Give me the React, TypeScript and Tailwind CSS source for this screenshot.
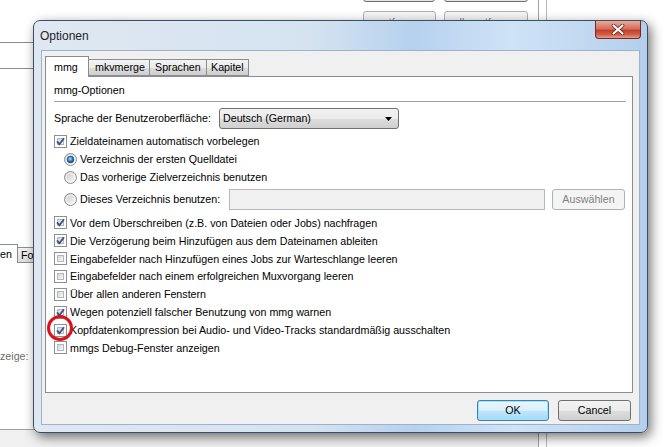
import React from "react";

function CheckBox({ checked }: { checked?: boolean }) {
  return (
    <span className="relative flex size-[13px] shrink-0 items-center justify-center border border-[#8e8f8f] bg-white">
      <span className="absolute inset-[2px] border border-[#b4b8be] bg-[linear-gradient(135deg,#d3d6da,#f8f8f8)]" />
      {checked && (
        <svg className="relative" width="11" height="11" viewBox="0 0 11 11">
          <path d="M2 5.4 L4.4 8.4 L9 2.2" fill="none" stroke="#3c5283" strokeWidth="1.8" />
        </svg>
      )}
    </span>
  );
}

function Radio({ checked }: { checked?: boolean }) {
  return (
    <svg className="shrink-0" width="13" height="13" viewBox="0 0 13 13">
      <defs>
        <linearGradient id="rring" x1="0" y1="0" x2="1" y2="1">
          <stop offset="0" stopColor="#c8c9cb" />
          <stop offset="1" stopColor="#fbfbfb" />
        </linearGradient>
        <radialGradient id="rdot" cx="0.45" cy="0.4" r="0.6">
          <stop offset="0" stopColor="#b6e4fd" />
          <stop offset="0.55" stopColor="#2b84c8" />
          <stop offset="1" stopColor="#0d3a6b" />
        </radialGradient>
      </defs>
      <circle cx="6.5" cy="6.5" r="6" fill="url(#rring)" stroke="#8e8f8f" />
      <circle cx="6.5" cy="6.5" r="4.4" fill="none" stroke="#ffffff" strokeOpacity="0.7" />
      {checked && <circle cx="6.5" cy="6.5" r="3.4" fill="url(#rdot)" stroke="#1a4a7c" strokeWidth="0.6" />}
    </svg>
  );
}

const checks: [string, boolean][] = [
  ["Vor dem Überschreiben (z.B. von Dateien oder Jobs) nachfragen", true],
  ["Die Verzögerung beim Hinzufügen aus dem Dateinamen ableiten", true],
  ["Eingabefelder nach Hinzufügen eines Jobs zur Warteschlange leeren", false],
  ["Eingabefelder nach einem erfolgreichen Muxvorgang leeren", false],
  ["Über allen anderen Fenstern", false],
  ["Wegen potenziell falscher Benutzung von mmg warnen", true],
  ["Kopfdatenkompression bei Audio- und Video-Tracks standardmäßig ausschalten", true],
  ["mmgs Debug-Fenster anzeigen", false],
];

export default function App() {
  return (
    <div className="relative h-[447px] w-[671px] overflow-hidden bg-white font-['Liberation_Sans',Arial,sans-serif] text-[10.7px] text-black">
      {/* background window */}
      <div className="absolute left-0 top-[42px] h-px w-[60px] bg-[#8c8c8c]" />
      <div className="absolute left-0 top-[68px] h-px w-[60px] bg-[#8c8c8c]" />
      <div className="absolute left-[363px] top-[-18px] h-[20px] w-[72px] rounded-[3px] border border-[#707070] bg-[#e6e6e6]" />
      <div className="absolute left-[444px] top-[-18px] h-[20px] w-[84px] rounded-[3px] border border-[#707070] bg-[#e6e6e6]" />
      <div className="absolute left-[363px] top-[11px] flex h-[22px] w-[73px] items-center justify-center rounded-[3px] border border-[#adb2b5] bg-[#f4f4f4] text-[#838383]">
        entfernen
      </div>
      <div className="absolute left-[444px] top-[11px] flex h-[22px] w-[84px] items-center justify-center rounded-[3px] border border-[#adb2b5] bg-[#f4f4f4] text-[#838383]">
        alle entfernen
      </div>
      <div className="absolute left-[538px] top-0 h-[447px] w-px bg-[#a0a0a0]" />
      <div className="absolute left-[546px] top-0 h-[447px] w-px bg-[#b8b8b8]" />
      <div className="absolute left-[-20px] top-[244px] flex h-[19px] w-[38px] items-center justify-end border border-[#898c95] border-b-0 bg-white pr-[5px]">
        en
      </div>
      <div className="absolute left-[17px] top-[247px] flex h-[16px] w-[30px] items-center border border-[#898c95] bg-[linear-gradient(#f2f2f2,#dcdcdc)] pl-[3px]">
        Fo
      </div>
      <div className="absolute left-[17px] top-[262px] h-px w-[40px] bg-[#898c95]" />
      <div className="absolute left-0 top-[348px] text-[#6d6d6d]">zeige:</div>
      <div className="absolute left-0 top-[429px] h-[18px] w-[538px] border-t border-[#a0a0a0] bg-[#f0f0f0]" />

      {/* dialog window */}
      <div className="absolute left-[33px] top-[20px] flex h-[413px] w-[615px] flex-col rounded-[7px] border border-[#3f4d60] bg-[linear-gradient(90deg,#dfe8f2_0%,#d5e3f1_45%,#b6d1ee_62%,#cfe3f7_78%,#b4cfec_100%)] shadow-[3px_4px_12px_rgba(0,0,0,0.55)]">
        <div className="flex h-[29px] shrink-0 items-start justify-between">
          <span className="mt-[6px] pl-[6px] text-[12px] text-[#1e1e1e]">Optionen</span>
          <div className="mr-[6px] flex h-[18px] w-[46px] items-center justify-center rounded-b-[4px] border border-t-0 border-[#6d2d22] bg-[linear-gradient(#e9a99a_0%,#d4705c_45%,#c2412a_55%,#d45d46_80%,#e9a08c_100%)]">
            <svg width="14" height="11" viewBox="0 0 14 11">
              <path d="M2.5 1.5 L11.5 9.5 M11.5 1.5 L2.5 9.5" stroke="#5a1f17" strokeWidth="3.6" strokeLinecap="round" />
              <path d="M2.5 1.5 L11.5 9.5 M11.5 1.5 L2.5 9.5" stroke="#ffffff" strokeWidth="2.2" strokeLinecap="round" />
            </svg>
          </div>
        </div>

        <div className="mx-[7px] flex h-[375px] flex-col border border-[#9db3cc] bg-[#f0f0f0]">
          {/* tabs */}
          <div className="ml-[3px] mt-[4px] flex h-[21px] items-end">
            <div className="relative z-10 -mb-px flex h-[21px] w-[44px] items-center border border-b-0 border-[#898c95] bg-white pl-[8px]">
              mmg
            </div>
            <div className="-ml-px flex h-[17px] w-[62px] items-center border border-[#898c95] bg-[linear-gradient(#f3f3f3_0%,#ebebeb_50%,#dddddd_51%,#cfcfcf_100%)] pl-[6px]">
              mkvmerge
            </div>
            <div className="-ml-px flex h-[17px] w-[58px] items-center border border-[#898c95] bg-[linear-gradient(#f3f3f3_0%,#ebebeb_50%,#dddddd_51%,#cfcfcf_100%)] pl-[5px]">
              Sprachen
            </div>
            <div className="-ml-px flex h-[17px] w-[43px] items-center border border-[#898c95] bg-[linear-gradient(#f3f3f3_0%,#ebebeb_50%,#dddddd_51%,#cfcfcf_100%)] pl-[4px]">
              Kapitel
            </div>
          </div>

          {/* panel */}
          <div className="relative ml-[3px] flex h-[317px] w-[588px] flex-col border border-[#898c95] bg-white pl-[8px] pr-[6px]">
            <div className="mt-[4px] flex h-[18px] items-center">mmg-Optionen</div>
            <div className="mt-[2px] h-px bg-[#a0a0a0]" />

            <div className="mt-[6px] flex h-[21px] items-center">
              <span className="w-[165px]">Sprache der Benutzeroberfläche:</span>
              <div className="flex h-[21px] w-[180px] items-center justify-between rounded-[3px] border border-[#707070] bg-[linear-gradient(#f2f2f2_0%,#ebebeb_50%,#dddddd_51%,#cfcfcf_100%)] pl-[3px] pr-[6px]">
                <span>Deutsch (German)</span>
                <svg width="7" height="4" viewBox="0 0 7 4">
                  <path d="M0 0 H7 L3.5 4 Z" fill="#000" />
                </svg>
              </div>
            </div>

            <div className="mt-[3px] flex h-[18px] items-center gap-[3px]">
              <CheckBox checked />
              <span>Zieldateinamen automatisch vorbelegen</span>
            </div>
            <div className="flex h-[18px] items-center gap-[3px] pl-[10px]">
              <Radio checked />
              <span>Verzeichnis der ersten Quelldatei</span>
            </div>
            <div className="flex h-[18px] items-center gap-[3px] pl-[10px]">
              <Radio />
              <span>Das vorherige Zielverzeichnis benutzen</span>
            </div>
            <div className="mt-[3px] flex h-[21px] items-center pl-[10px]">
              <Radio />
              <span className="ml-[3px] w-[149px]">Dieses Verzeichnis benutzen:</span>
              <div className="h-[21px] w-[316px] border border-[#b5b8bd] bg-[#f0f0f0]" />
              <div className="ml-[7px] flex h-[21px] w-[73px] items-center justify-center rounded-[3px] border border-[#adb2b5] bg-[#f4f4f4] text-[#838383]">
                Auswählen
              </div>
            </div>

            <div className="mt-[4px] flex flex-col">
              {checks.map(([label, on]) => (
                <div key={label} className="flex h-[17.86px] items-center gap-[3px]">
                  <CheckBox checked={on} />
                  <span>{label}</span>
                </div>
              ))}
            </div>

            {/* annotation */}
            <div className="absolute left-[1px] top-[238px] size-[26px] rounded-full border-[3px] border-[#e0101a]" />
          </div>

          {/* buttons */}
          <div className="mr-[8px] mt-[7px] flex justify-end gap-[9px]">
            <div className="flex h-[21px] w-[72px] items-center justify-center rounded-[3px] border border-[#3c7fb1] bg-[linear-gradient(#eaf6fd_0%,#d9f0fc_50%,#bee6fd_51%,#a7d9f5_100%)] shadow-[inset_0_0_0_1px_#9fe2fd]">
              OK
            </div>
            <div className="flex h-[21px] w-[73px] items-center justify-center rounded-[3px] border border-[#707070] bg-[linear-gradient(#f2f2f2_0%,#ebebeb_50%,#dddddd_51%,#cfcfcf_100%)]">
              Cancel
            </div>
          </div>
        </div>
      </div>
    </div>
  );
}
